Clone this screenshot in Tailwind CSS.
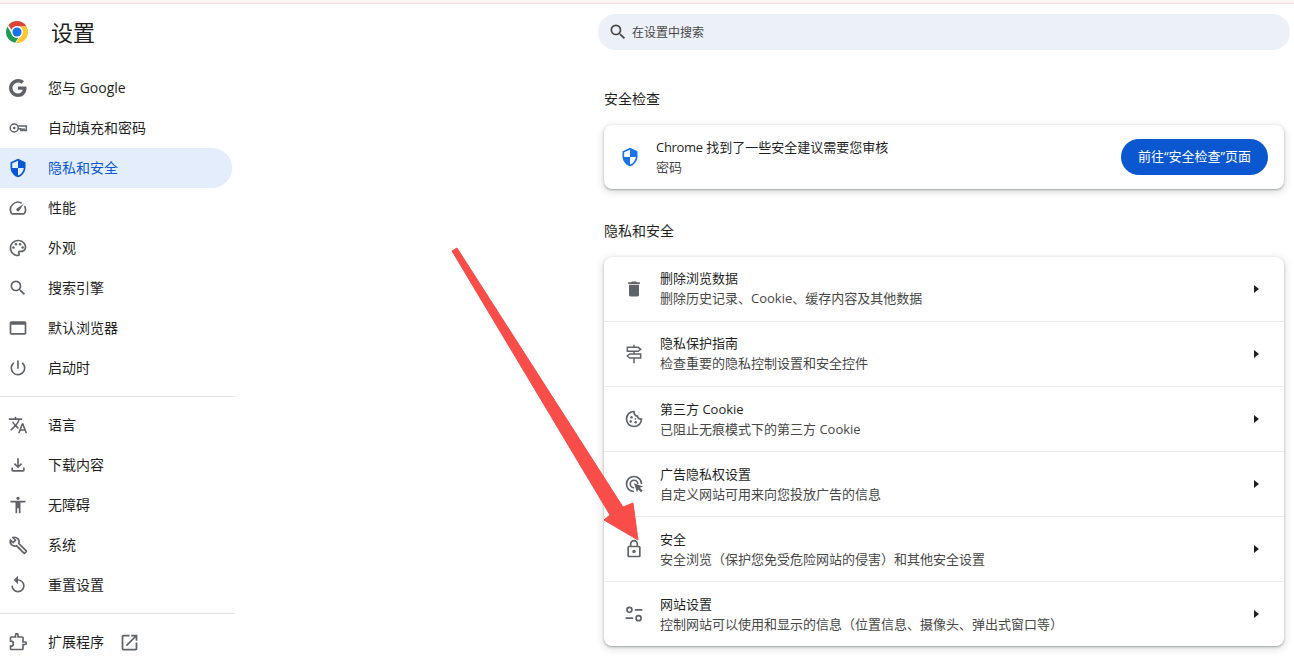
<!doctype html>
<html>
  <head>
    <meta charset="utf-8" />
    <title>设置</title>
    <script src="https://cdn.jsdelivr.net/npm/@tailwindcss/browser@4"></script>
  </head>
  <body class="relative h-[662px] w-[1294px] overflow-hidden bg-white font-['Open_Sans','Noto_Sans_CJK_SC',sans-serif] text-[#1f1f1f]">
    <div class="h-[4px] border-b border-[#fbdcdc] bg-[#fff5f4]"></div>

    <div class="flex">
      <!-- Sidebar -->
      <aside class="w-[235px] shrink-0">
        <div class="flex h-[56px] items-center">
          <svg class="ml-[6px] h-[22px] w-[22px]" viewBox="0 0 48 48">
            <circle cx="24" cy="24" r="24" fill="#fff" />
            <path d="M24 0a24 24 0 0 1 20.800 12H24a12 12 0 0 0-11.300 8L5.300 9A24 24 0 0 1 24 0z" fill="#dc4437" />
            <path d="M3.200 12 13.600 30a12 12 0 0 0 13.900 5.500L20.100 47.700A24 24 0 0 1 3.200 12z" fill="#1f9d55" />
            <path d="M44.800 12A24 24 0 0 1 22 48l10.400-18A12 12 0 0 0 32 14.500V12z" fill="#fcc934" />
            <circle cx="24" cy="24" r="13" fill="#fff" />
            <circle cx="24" cy="24" r="10" fill="#1a73e8" />
          </svg>
          <h1 class="ml-[23px] text-[22px] leading-none font-normal">设置</h1>
        </div>

        <nav class="mt-[8px] pr-[3px] text-[14px]">
          <a class="flex h-[40px] items-center">
            <svg class="mx-[8px] h-[20px] w-[20px] fill-[#5f6368]" viewBox="0 0 24 24"><path d="M21.800 10.200H12v4h5.600c-.5 2.600-2.800 4.400-5.600 4.400a6.600 6.600 0 1 1 4.300-11.600l3-3A10.800 10.800 0 1 0 12 22.800c5.900 0 10.200-4.100 10.200-10.500 0-.7-.1-1.400-.4-2.100z" /></svg>
            <span class="ml-[12px] pb-[2px]">您与 Google</span>
          </a>
          <a class="flex h-[40px] items-center">
            <svg class="mx-[8px] h-[20px] w-[20px]" viewBox="0 0 24 24"><circle cx="7.500" cy="12" r="4.800" fill="none" stroke="#5f6368" stroke-width="1.800" /><circle cx="7.500" cy="12" r="1.600" fill="#5f6368" /><path d="M12.300 9.500H22v5.500h-2.500v-1.500h-2V15h-2v-2h-3.200" fill="none" stroke="#5f6368" stroke-width="1.800" /></svg>
            <span class="ml-[12px] pb-[2px]">自动填充和密码</span>
          </a>
          <a class="flex h-[40px] items-center rounded-r-full bg-[#e3edfb] text-[#0b57d0]">
            <svg class="mx-[8px] h-[20px] w-[20px]" viewBox="0 0 24 24"><path d="M12 1 3 5v6c0 5.550 3.840 10.740 9 12 5.160-1.260 9-6.450 9-12V5l-9-4z" fill="#0b57d0" /><path d="M12 3.200v8.800H5V6.300zM12 12h7c-.5 4.200-3.300 7.800-7 9z" fill="#e3edfb" /></svg>
            <span class="ml-[12px] pb-[2px]">隐私和安全</span>
          </a>
          <a class="flex h-[40px] items-center">
            <svg class="mx-[8px] h-[20px] w-[20px] fill-[#5f6368]" viewBox="0 0 24 24"><path d="m20.380 8.570-1.230 1.850a8 8 0 0 1-.22 7.580H5.070A8 8 0 0 1 15.580 6.850l1.850-1.230A10 10 0 0 0 3.350 19a2 2 0 0 0 1.720 1h13.850a2 2 0 0 0 1.740-1 10 10 0 0 0-.27-10.440zm-9.790 6.840a2 2 0 0 0 2.830 0l5.660-8.490-8.490 5.660a2 2 0 0 0 0 2.830z" /></svg>
            <span class="ml-[12px] pb-[2px]">性能</span>
          </a>
          <a class="flex h-[40px] items-center">
            <svg class="mx-[8px] h-[20px] w-[20px] fill-[#5f6368]" viewBox="0 0 24 24"><path d="M12 22C6.490 22 2 17.510 2 12S6.490 2 12 2s10 4.040 10 9c0 3.310-2.690 6-6 6h-1.770c-.28 0-.5.22-.5.5 0 .12.05.23.13.33.41.47.64 1.060.64 1.670A2.500 2.500 0 0 1 12 22zm0-18c-4.410 0-8 3.590-8 8s3.590 8 8 8c.28 0 .5-.22.5-.5a.54.54 0 0 0-.14-.35c-.41-.46-.63-1.050-.63-1.650a2.500 2.500 0 0 1 2.500-2.500H16c2.210 0 4-1.790 4-4 0-3.860-3.590-7-8-7z" /><circle cx="6.500" cy="11.500" r="1.500" /><circle cx="9.500" cy="7.500" r="1.500" /><circle cx="14.500" cy="7.500" r="1.500" /><circle cx="17.500" cy="11.500" r="1.500" /></svg>
            <span class="ml-[12px] pb-[2px]">外观</span>
          </a>
          <a class="flex h-[40px] items-center">
            <svg class="mx-[8px] h-[20px] w-[20px] fill-[#5f6368]" viewBox="0 0 24 24"><path d="M15.500 14h-.79l-.28-.27A6.471 6.471 0 0 0 16 9.500 6.500 6.500 0 1 0 9.500 16c1.610 0 3.090-.59 4.230-1.570l.27.28v.79l5 4.990L20.490 19l-4.990-5zm-6 0C7.010 14 5 11.990 5 9.500S7.010 5 9.500 5 14 7.010 14 9.500 11.990 14 9.500 14z" /></svg>
            <span class="ml-[12px] pb-[2px]">搜索引擎</span>
          </a>
          <a class="flex h-[40px] items-center">
            <svg class="mx-[8px] h-[20px] w-[20px] fill-[#5f6368]" viewBox="0 0 24 24"><path d="M20 4H4c-1.100 0-2 .9-2 2v12c0 1.100.9 2 2 2h16c1.100 0 2-.9 2-2V6c0-1.100-.9-2-2-2zm0 14H4V8h16v10z" /></svg>
            <span class="ml-[12px] pb-[2px]">默认浏览器</span>
          </a>
          <a class="flex h-[40px] items-center">
            <svg class="mx-[8px] h-[20px] w-[20px] fill-[#5f6368]" viewBox="0 0 24 24"><path d="M13 3h-2v10h2V3zm4.830 2.170-1.420 1.420A6.920 6.920 0 0 1 19 12c0 3.870-3.130 7-7 7A6.995 6.995 0 0 1 7.580 6.580L6.170 5.170A8.932 8.932 0 0 0 3 12a9 9 0 0 0 18 0c0-2.740-1.230-5.180-3.170-6.830z" /></svg>
            <span class="ml-[12px] pb-[2px]">启动时</span>
          </a>

          <div class="my-[8px] -mr-[3px] border-t border-[#e3e3e3]"></div>

          <a class="flex h-[40px] items-center">
            <svg class="mx-[8px] h-[20px] w-[20px] fill-[#5f6368]" viewBox="0 0 24 24"><path d="m12.870 15.070-2.540-2.510.03-.03A17.520 17.520 0 0 0 14.070 6H17V4h-7V2H8v2H1v1.990h11.170C11.500 7.920 10.440 9.750 9 11.350 8.070 10.320 7.300 9.190 6.690 8h-2c.73 1.630 1.730 3.170 2.980 4.560l-5.090 5.020L4 19l5-5 3.110 3.110.76-2.040zM18.500 10h-2L12 22h2l1.120-3h4.750L21 22h2l-4.500-12zm-2.620 7 1.620-4.330L19.120 17h-3.240z" /></svg>
            <span class="ml-[12px] pb-[2px]">语言</span>
          </a>
          <a class="flex h-[40px] items-center">
            <svg class="mx-[8px] h-[20px] w-[20px] fill-[#5f6368]" viewBox="0 0 24 24"><path d="M18 15v3H6v-3H4v3c0 1.100.9 2 2 2h12c1.100 0 2-.9 2-2v-3h-2zm-1-4-1.410-1.410L13 12.170V4h-2v8.170L8.410 9.590 7 11l5 5 5-5z" /></svg>
            <span class="ml-[12px] pb-[2px]">下载内容</span>
          </a>
          <a class="flex h-[40px] items-center">
            <svg class="mx-[8px] h-[20px] w-[20px] fill-[#5f6368]" viewBox="0 0 24 24"><path d="M12 2c1.100 0 2 .9 2 2s-.9 2-2 2-2-.9-2-2 .9-2 2-2zm9 7h-6v13h-2v-6h-2v6H9V9H3V7h18v2z" /></svg>
            <span class="ml-[12px] pb-[2px]">无障碍</span>
          </a>
          <a class="flex h-[40px] items-center">
            <svg class="mx-[8px] h-[20px] w-[20px] fill-none stroke-[#5f6368] stroke-2" viewBox="0 0 24 24"><path d="M21.800 19.100 13 10.300c.7-2 .3-4.300-1.300-5.900-1.700-1.700-4-2-5.800-1.400L9 6.200 6.200 9 3 5.900c-.7 1.900-.3 4.200 1.400 5.800 1.600 1.600 3.900 2 5.900 1.300l8.800 8.800c.3.300.7.300 1 0l1.700-1.700c.3-.3.3-.7 0-1z" /></svg>
            <span class="ml-[12px] pb-[2px]">系统</span>
          </a>
          <a class="flex h-[40px] items-center">
            <svg class="mx-[8px] h-[20px] w-[20px] fill-[#5f6368]" viewBox="0 0 24 24"><path d="M12 5V1L7 6l5 5V7c3.310 0 6 2.690 6 6s-2.690 6-6 6-6-2.690-6-6H4c0 4.420 3.580 8 8 8s8-3.580 8-8-3.580-8-8-8z" /></svg>
            <span class="ml-[12px] pb-[2px]">重置设置</span>
          </a>

          <div class="my-[8px] -mr-[3px] border-t border-[#e3e3e3]"></div>

          <a class="flex h-[40px] items-center">
            <svg class="mx-[8px] h-[20px] w-[20px] fill-none stroke-[#5f6368] stroke-2" viewBox="0 0 24 24"><path d="M20.500 12H18V7c0-.6-.4-1-1-1h-5V3.500a1.500 1.500 0 0 0-3 0V6H4c-.6 0-1 .4-1 1v4h.5a3 3 0 0 1 0 6H3v3c0 .6.400 1 1 1h13c.6 0 1-.4 1-1v-5h2.500a1.500 1.500 0 0 0 0-3z" /></svg>
            <span class="ml-[12px] pb-[2px]">扩展程序</span>
            <svg class="ml-[15px] h-[21px] w-[21px] fill-[#5f6368]" viewBox="0 0 24 24"><path d="M19 19H5V5h7V3H5a2 2 0 0 0-2 2v14a2 2 0 0 0 2 2h14c1.100 0 2-.9 2-2v-7h-2v7zM14 3v2h3.590l-9.830 9.830 1.410 1.410L19 6.410V10h2V3h-7z" /></svg>
          </a>
        </nav>
      </aside>

      <!-- Main column -->
      <main class="ml-[363px] w-[692px]">
        <div class="mt-[10px] flex h-[36px] items-center rounded-full bg-[#ecf0f8] pl-[10px]">
          <svg class="h-[20px] w-[20px] fill-[#474747]" viewBox="0 0 24 24"><path d="M15.500 14h-.79l-.28-.27A6.471 6.471 0 0 0 16 9.500 6.500 6.500 0 1 0 9.500 16c1.610 0 3.090-.59 4.230-1.570l.27.28v.79l5 4.990L20.490 19l-4.990-5zm-6 0C7.010 14 5 11.990 5 9.500S7.010 5 9.500 5 14 7.010 14 9.500 11.990 14 9.500 14z" /></svg>
          <span class="ml-[4px] pt-[2px] text-[12px] text-[#474747]">在设置中搜索</span>
        </div>

        <h2 class="mt-[39px] ml-[6px] text-[14px] leading-[20px] font-normal">安全检查</h2>

        <section class="mt-[16px] ml-[6px] flex h-[64px] w-[680px] items-center rounded-[8px] bg-white shadow-[0_1px_2px_rgba(60,64,67,0.4),0_2px_6px_2px_rgba(60,64,67,0.15)]">
          <svg class="ml-[16px] h-[20px] w-[20px]" viewBox="0 0 24 24"><path d="M12 1 3 5v6c0 5.550 3.840 10.740 9 12 5.160-1.260 9-6.450 9-12V5l-9-4z" fill="#1a73e8" /><path d="M12 3.200v8.800H5V6.300zM12 12h7c-.5 4.200-3.300 7.800-7 9z" fill="#fff" /></svg>
          <div class="ml-[16px] flex-1 pb-[1px] text-[13px] leading-[20px]">
            <div><span class="tracking-[-0.3px]">Chrome</span> 找到了一些安全建议需要您审核</div>
            <div class="text-[#474747]">密码</div>
          </div>
          <button class="mr-[16px] h-[36px] w-[147px] rounded-full bg-[#0b57d0] text-[13px] text-white">前往“安全检查”页面</button>
        </section>

        <h2 class="mt-[32px] ml-[6px] text-[14px] leading-[20px] font-normal">隐私和安全</h2>

        <section class="mt-[16px] ml-[6px] w-[680px] rounded-[8px] bg-white text-[13px] leading-[20px] shadow-[0_1px_2px_rgba(60,64,67,0.4),0_2px_6px_2px_rgba(60,64,67,0.15)]">
          <div class="flex h-[64px] items-center">
            <svg class="ml-[20px] h-[20px] w-[20px] fill-[#5f6368]" viewBox="0 0 24 24"><path d="M6 19c0 1.100.9 2 2 2h8c1.100 0 2-.9 2-2V7H6v12zM19 4h-3.500l-1-1h-5l-1 1H5v2h14V4z" /></svg>
            <div class="ml-[16px] flex-1 pb-[2px]">
              <div>删除浏览数据</div>
              <div class="text-[#474747]">删除历史记录、Cookie、缓存内容及其他数据</div>
            </div>
            <svg class="mr-[25px] h-[8px] w-[5px] fill-[#1f1f1f]" viewBox="0 0 5 8"><path d="M0 0l5 4-5 4z" /></svg>
          </div>
          <div class="flex h-[65px] items-center border-t border-[#ebebeb]">
            <svg class="ml-[20px] h-[20px] w-[20px] fill-none stroke-[#5f6368] stroke-[1.8]" viewBox="0 0 24 24"><path d="M12 1v3M12 9v3M12 17v6M4 4h13l3 2.400-3 2.400H4zM20 12H7l-3 2.400 3 2.400h13z" /></svg>
            <div class="ml-[16px] flex-1 pb-[2px]">
              <div>隐私保护指南</div>
              <div class="text-[#474747]">检查重要的隐私控制设置和安全控件</div>
            </div>
            <svg class="mr-[25px] h-[8px] w-[5px] fill-[#1f1f1f]" viewBox="0 0 5 8"><path d="M0 0l5 4-5 4z" /></svg>
          </div>
          <div class="flex h-[65px] items-center border-t border-[#ebebeb]">
            <svg class="ml-[20px] h-[20px] w-[20px]" viewBox="0 0 24 24"><path d="M12 3a9 9 0 1 0 9 9c-2.500.5-4.500-1-4.800-3.500C13.500 8.800 12 6 12 3z" fill="none" stroke="#5f6368" stroke-width="2" /><circle cx="9" cy="10" r="1.500" fill="#5f6368" /><circle cx="8" cy="15" r="1.500" fill="#5f6368" /><circle cx="14" cy="16" r="1.500" fill="#5f6368" /><circle cx="13.500" cy="12" r="1" fill="#5f6368" /></svg>
            <div class="ml-[16px] flex-1">
              <div>第三方 Cookie</div>
              <div class="text-[#474747]">已阻止无痕模式下的第三方 Cookie</div>
            </div>
            <svg class="mr-[25px] h-[8px] w-[5px] fill-[#1f1f1f]" viewBox="0 0 5 8"><path d="M0 0l5 4-5 4z" /></svg>
          </div>
          <div class="flex h-[65px] items-center border-t border-[#ebebeb]">
            <svg class="ml-[20px] h-[20px] w-[20px]" viewBox="0 0 24 24"><path d="M12 21a9 9 0 1 1 9-9M12 16.500a4.500 4.500 0 1 1 4.500-4.500" fill="none" stroke="#5f6368" stroke-width="2" /><path d="M12 11l11 4-4 1.500 3.500 3.500-2 2-3.500-3.500L15.500 22z" fill="#5f6368" /></svg>
            <div class="ml-[16px] flex-1">
              <div>广告隐私权设置</div>
              <div class="text-[#474747]">自定义网站可用来向您投放广告的信息</div>
            </div>
            <svg class="mr-[25px] h-[8px] w-[5px] fill-[#1f1f1f]" viewBox="0 0 5 8"><path d="M0 0l5 4-5 4z" /></svg>
          </div>
          <div class="flex h-[65px] items-center border-t border-[#ebebeb]">
            <svg class="ml-[20px] h-[20px] w-[20px] fill-[#5f6368]" viewBox="0 0 24 24"><path d="M18 8h-1V6c0-2.760-2.240-5-5-5S7 3.240 7 6v2H6c-1.100 0-2 .9-2 2v10c0 1.100.9 2 2 2h12c1.100 0 2-.9 2-2V10c0-1.100-.9-2-2-2zM9 6c0-1.660 1.340-3 3-3s3 1.340 3 3v2H9V6zm9 14H6V10h12v10zm-6-3c1.100 0 2-.9 2-2s-.9-2-2-2-2 .9-2 2 .9 2 2 2z" /></svg>
            <div class="ml-[16px] flex-1">
              <div>安全</div>
              <div class="text-[#474747]">安全浏览（保护您免受危险网站的侵害）和其他安全设置</div>
            </div>
            <svg class="mr-[25px] h-[8px] w-[5px] fill-[#1f1f1f]" viewBox="0 0 5 8"><path d="M0 0l5 4-5 4z" /></svg>
          </div>
          <div class="flex h-[65px] items-center border-t border-[#ebebeb]">
            <svg class="ml-[20px] h-[20px] w-[20px] fill-none stroke-[#5f6368] stroke-2" viewBox="0 0 24 24"><circle cx="6.500" cy="7" r="3" /><path d="M13 7h9M2 17h9" /><circle cx="17.500" cy="17" r="3" /></svg>
            <div class="ml-[16px] flex-1">
              <div>网站设置</div>
              <div class="text-[#474747]">控制网站可以使用和显示的信息（位置信息、摄像头、弹出式窗口等）</div>
            </div>
            <svg class="mr-[25px] h-[8px] w-[5px] fill-[#1f1f1f]" viewBox="0 0 5 8"><path d="M0 0l5 4-5 4z" /></svg>
          </div>
        </section>
      </main>
    </div>

    <!-- Red annotation arrow drawn over the page -->
    <svg class="absolute top-0 left-0 h-[662px] w-[1294px]" viewBox="0 0 1294 662">
      <path d="M452 251 457 248 623 507 633 503 638 540 604 520 610 515z" fill="#f94d4a" stroke="#f94d4a" stroke-linejoin="round" />
    </svg>
  </body>
</html>
